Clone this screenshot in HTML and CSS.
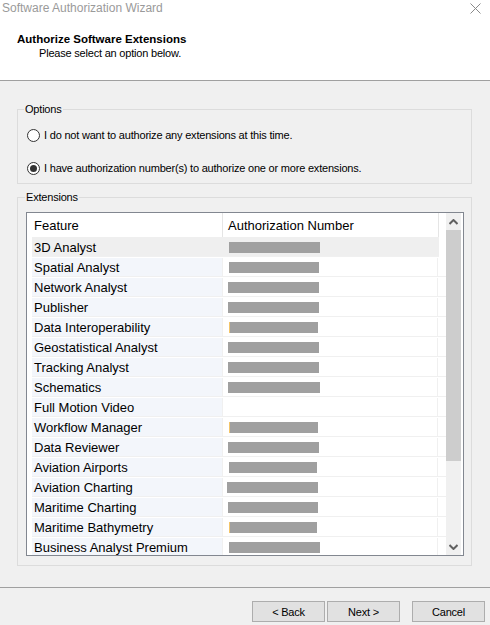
FILE: index.html
```html
<!DOCTYPE html>
<html>
<head>
    <meta charset="UTF-8">
    <title>Software Authorization Wizard</title>
    <link rel="stylesheet" href="styles.css">
</head>
<body>
    <div class="header">
        <div class="titlebar">
            <span class="title">Software Authorization Wizard</span>
            <svg class="close" viewBox="0 0 11 11">
                <path d="M0.5 0.5L10.5 10.5M10.5 0.5L0.5 10.5"/>
            </svg>
        </div>
        <div class="heading">Authorize Software Extensions</div>
        <div class="subheading">Please select an option below.</div>
    </div>

    <div class="main">
        <fieldset class="group options">
            <legend>Options</legend>
            <label class="radio-row"><span class="radio"></span>I do not want to authorize any extensions at this time.</label>
            <label class="radio-row"><span class="radio checked"></span>I have authorization number(s) to authorize one or more extensions.</label>
        </fieldset>

        <fieldset class="group extensions">
            <legend>Extensions</legend>
            <div class="listview">
                <div class="list">
                    <div class="list-head">
                        <div class="hcell feature">Feature</div>
                        <div class="hcell auth">Authorization Number</div>
                        <div class="hcell rest"></div>
                    </div>
                    <div class="rows" id="rows"></div>
                </div>
                <div class="scrollbar">
                    <div class="arrow"><svg viewBox="0 0 9 6"><path d="M0.5 5L4.5 1L8.5 5"/></svg></div>
                    <div class="thumb"></div>
                    <div class="track"></div>
                    <div class="arrow"><svg viewBox="0 0 9 6"><path d="M0.5 1L4.5 5L8.5 1"/></svg></div>
                </div>
            </div>
        </fieldset>
    </div>

    <div class="footer">
        <button class="btn">&lt; Back</button>
        <button class="btn">Next &gt;</button>
        <button class="btn cancel">Cancel</button>
    </div>

    <script>
        // feature name, masked number width, start offset, edited marker
        const features = [
            ['3D Analyst', 91, 1, false],
            ['Spatial Analyst', 90, 1, false],
            ['Network Analyst', 91, 0, false],
            ['Publisher', 91, 0, false],
            ['Data Interoperability', 89, 1, true],
            ['Geostatistical Analyst', 91, 0, false],
            ['Tracking Analyst', 91, 0, false],
            ['Schematics', 92, 0, false],
            ['Full Motion Video', 0, 0, false],
            ['Workflow Manager', 89, 1, true],
            ['Data Reviewer', 91, 0, false],
            ['Aviation Airports', 88, 1, false],
            ['Aviation Charting', 91, -1, false],
            ['Maritime Charting', 90, 0, false],
            ['Maritime Bathymetry', 88, 1, true],
            ['Business Analyst Premium', 91, 1, false]
        ];

        const rows = document.getElementById('rows');
        features.forEach(([name, width, offset, edited], i) => {
            const row = document.createElement('div');
            row.className = 'row' + (i === 0 ? ' selected' : '');
            let bar = '';
            if (width) {
                bar = `<span class="mask${edited ? ' edited' : ''}" style="width:${width}px;margin-left:${5 + offset}px"></span>`;
            }
            row.innerHTML = `<div class="cell feature">${name}</div><div class="cell auth">${bar}</div>`;
            rows.appendChild(row);
        });
    </script>
</body>
</html>
```

FILE: styles.css
```css
* { box-sizing: border-box; }
body {
    margin: 0;
    width: 490px;
    height: 625px;
    overflow: hidden;
    background: #f0f0f0;
    font-family: "Liberation Sans", Arial, sans-serif;
    color: #000;
    display: flex;
    flex-direction: column;
}

/* header */
.header {
    background: #fff;
    height: 81px;
    border-bottom: 1px solid #a0a0a0;
    flex-shrink: 0;
}
.titlebar {
    height: 16px;
    display: flex;
    align-items: center;
    justify-content: space-between;
    padding: 0 9px 0 2px;
}
.title {
    font-size: 12px;
    color: #9a9a9a;
}
.close {
    width: 11px;
    height: 11px;
    stroke: #8a8a8a;
    stroke-width: 1;
    fill: none;
}
.heading {
    margin: 16px 0 0 17px;
    font-size: 11.5px;
    font-weight: bold;
    line-height: 14px;
}
.subheading {
    margin: 1px 0 0 39px;
    font-size: 11px;
    letter-spacing: -0.2px;
    line-height: 13px;
}

/* group boxes */
.main {
    padding: 21px 18px 0 17px;
    flex-shrink: 0;
}
.group {
    margin: 0;
    border: 1px solid #dcdcdc;
    min-width: 0;
}
.group legend {
    font-size: 11px;
    letter-spacing: -0.2px;
    line-height: 14px;
    padding: 0 1px;
}
.options {
    padding: 9px 0 5px 9px;
    display: flex;
    flex-direction: column;
    gap: 13px;
}
.options legend { margin-left: -3px; }
.radio-row {
    height: 20px;
    display: flex;
    align-items: center;
    font-size: 11px;
    letter-spacing: -0.2px;
}
.radio {
    width: 13px;
    height: 13px;
    border: 1px solid #333;
    border-radius: 50%;
    background: #fff;
    margin-right: 4px;
    display: flex;
    align-items: center;
    justify-content: center;
}
.radio.checked::after {
    content: "";
    width: 7px;
    height: 7px;
    border-radius: 50%;
    background: #333;
}
.extensions {
    margin-top: 6px;
    padding: 8px 7px 9px 8px;
}
.extensions legend { margin-left: -1px; }

/* list view */
.listview {
    height: 344px;
    border: 1px solid #828790;
    background: #fff;
    display: flex;
    overflow: hidden;
}
.list {
    flex: 1;
    overflow: hidden;
}
.list-head {
    height: 24px;
    display: flex;
    font-size: 13px;
}
.hcell {
    display: flex;
    align-items: center;
}
.hcell.feature { width: 195px; padding-left: 7px; }
.hcell.auth { width: 216px; padding-left: 5px; border-left: 1px solid #e5e5e5; }
.hcell.rest { flex: 1; border-left: 1px solid #e5e5e5; }

.row {
    height: 20px;
    margin-left: 5px;
    display: flex;
    border-bottom: 1px solid #f0f0f0;
    font-size: 13px;
    padding-top: 1px;
}
.cell { display: flex; align-items: center; }
.cell.feature {
    width: 190px;
    padding-left: 2px;
    background: #f3f6fb;
}
.cell.auth {
    width: 216px;
    border-left: 1px solid #f0f0f0;
    border-right: 1px solid #f0f0f0;
}
.row.selected {
    background: #efefef;
    width: 407px;
}
.row.selected .cell { background: #efefef; border-color: #efefef; }
.mask {
    display: block;
    height: 11px;
    background: #a0a0a0;
}
.mask.edited { border-left: 1px solid #f3c56a; }

/* scrollbar */
.scrollbar {
    width: 15px;
    margin-right: 2px;
    background: #f0f0f0;
    display: flex;
    flex-direction: column;
}
.arrow {
    height: 17px;
    display: flex;
    align-items: center;
    justify-content: center;
}
.arrow svg {
    width: 9px;
    height: 6px;
    fill: none;
    stroke: #606060;
    stroke-width: 2;
}
.thumb {
    height: 231px;
    background: #cdcdcd;
}
.track { flex: 1; }

/* footer */
.footer {
    margin-top: 21px;
    flex: 1;
    border-top: 1px solid #a0a0a0;
    display: flex;
    justify-content: flex-end;
    align-items: flex-start;
    padding: 13px 5px 0 0;
}
.btn {
    width: 73px;
    height: 21px;
    margin-left: 2px;
    background: #e1e1e1;
    border: 1px solid #adadad;
    font-family: "Liberation Sans", Arial, sans-serif;
    font-size: 11px;
    letter-spacing: -0.2px;
    color: #000;
    padding: 0;
}
.btn.cancel { margin-left: 12px; }
```
